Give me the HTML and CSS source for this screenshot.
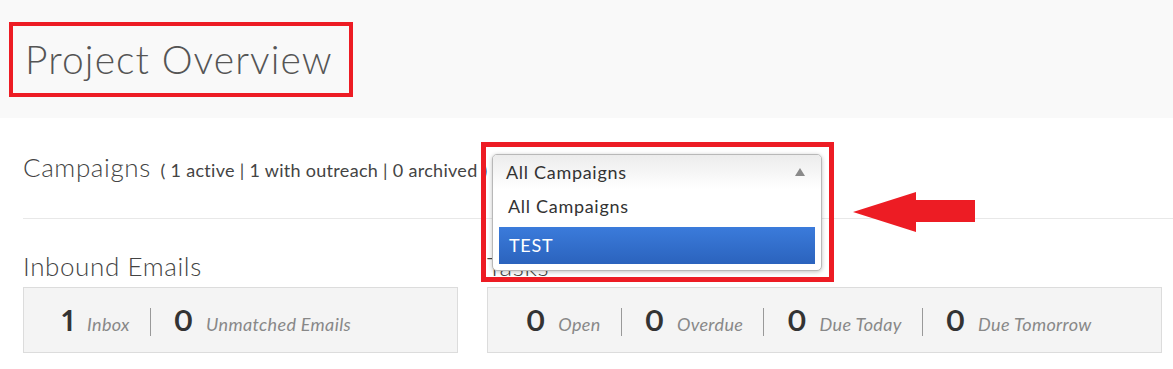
FILE: index.html
```html
<!DOCTYPE html>
<html lang="en">
<head>
<meta charset="UTF-8">
<meta name="viewport" content="width=device-width, initial-scale=1.0">
<title>Project Overview</title>
<link rel="stylesheet" href="styles.css">
</head>
<body>
    <!-- page header -->
    <header class="page-head">
        <h1 class="page-title">Project Overview</h1>
    </header>

    <main class="content">
        <!-- campaigns line with the open picker -->
        <section class="campaigns">
            <h2 class="section-title">Campaigns <small class="counts">( 1 active | 1 with outreach | 0 archived )</small></h2>

            <div class="callout">
                <div class="picker">
                    <div class="picker-current">
                        <span>All Campaigns</span>
                        <span class="picker-arrow"></span>
                    </div>
                    <ul class="picker-list">
                        <li class="picker-option">All Campaigns</li>
                        <li class="picker-option selected">TEST</li>
                    </ul>
                </div>
            </div>

            <svg class="pointer" width="122" height="40" viewBox="0 0 122 40">
                <polygon points="0,20 63,0 63,8 122,8 122,30 63,30 63,40" fill="#ed1c24"/>
            </svg>
        </section>

        <!-- counters -->
        <div class="stats-row">
            <section class="stat-col inbound">
                <h2 class="section-title">Inbound Emails</h2>
                <div class="stat-box">
                    <div class="stat"><b>1</b><i>Inbox</i></div>
                    <div class="stat"><b>0</b><i>Unmatched Emails</i></div>
                </div>
            </section>
            <section class="stat-col tasks">
                <h2 class="section-title">Tasks</h2>
                <div class="stat-box">
                    <div class="stat"><b>0</b><i>Open</i></div>
                    <div class="stat"><b>0</b><i>Overdue</i></div>
                    <div class="stat"><b>0</b><i>Due Today</i></div>
                    <div class="stat"><b>0</b><i>Due Tomorrow</i></div>
                </div>
            </section>
        </div>
    </main>
</body>
</html>
```

FILE: styles.css
```css
body {
    margin: 0;
    font-family: "Lato", "Open Sans", sans-serif;
    color: #444;
    background: #fff;
}

.page-head {
    background: #f9f9f9;
    padding: 22px 0 21px 9px;
}

.page-title {
    display: inline-block;
    margin: 0;
    border: 4px solid #ed1c24;
    padding: 0 16px 0 12px;
    height: 67px;
    line-height: 66px;
    font-size: 39px;
    font-weight: 300;
    letter-spacing: 1.1px;
    color: #555;
}

.content {
    padding-left: 23px;
}

.campaigns {
    position: relative;
    padding: 32px 0 31px;
    border-bottom: 1px solid #e8e8e8;
}

.section-title {
    margin: 0;
    font-size: 26px;
    line-height: 34px;
    font-weight: 300;
    letter-spacing: 0.6px;
    color: #444;
}

.counts {
    margin-left: 2px;
    font-size: 18px;
    font-weight: 400;
    letter-spacing: 0.3px;
    color: #444;
}

.callout {
    position: absolute;
    left: 458px;
    top: 24px;
    border: 5px solid #ed1c24;
    padding: 7px 7px 6px 6px;
    z-index: 2;
}

.picker {
    width: 328px;
    border: 1px solid #b8b8b8;
    border-radius: 5px;
    background: #fff;
    box-shadow: 0 1px 4px rgba(0, 0, 0, 0.25);
    overflow: hidden;
}

.picker-current {
    display: flex;
    justify-content: space-between;
    align-items: center;
    height: 34px;
    padding: 0 16px 0 13px;
    background: linear-gradient(#ececec, #fff);
    font-size: 18px;
    letter-spacing: 0.7px;
    color: #333;
}

.picker-arrow {
    width: 0;
    height: 0;
    border-left: 5px solid transparent;
    border-right: 5px solid transparent;
    border-bottom: 8px solid #8a8a8a;
}

.picker-list {
    list-style: none;
    margin: 0;
    padding: 0 6px 6px;
}

.picker-option {
    height: 35px;
    line-height: 35px;
    padding: 0 0 3px 9px;
    font-size: 18px;
    letter-spacing: 0.7px;
    color: #333;
}

.picker-option.selected {
    height: 37px;
    line-height: 37px;
    padding: 0 0 0 10px;
    background: linear-gradient(#3b7bdb, #2b63bd);
    color: #fff;
}

.pointer {
    position: absolute;
    left: 830px;
    top: 74px;
}

.stats-row {
    display: grid;
    grid-template-columns: 435px 675px;
    gap: 29px;
    padding-top: 30px;
}

.stat-col .section-title {
    margin-bottom: 4px;
}

.stat-box {
    display: flex;
    align-items: center;
    padding: 3px 0 0 38px;
    box-sizing: border-box;
    height: 66px;
    background: #f4f4f4;
    border: 1px solid #dcdcdc;
}

.stat {
    display: flex;
    align-items: baseline;
    gap: 13px;
}

.stat + .stat {
    margin-left: 20px;
    padding-left: 23px;
    border-left: 1px solid #999;
}

.stat b {
    font-size: 29px;
    font-weight: 700;
    font-variant-numeric: proportional-nums;
    color: #333;
    line-height: 24px;
}

.stat i {
    font-size: 18px;
    letter-spacing: 0.35px;
    color: #888;
    line-height: 24px;
}
```
